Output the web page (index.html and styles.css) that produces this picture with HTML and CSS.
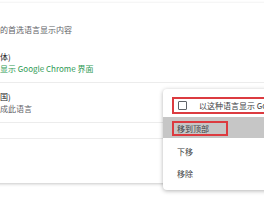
FILE: index.html
```html
<!DOCTYPE html>
<html>
<head>
    <link rel="stylesheet" href="styles.css">
</head>
<body>
    <div class="card">
        <p class="hint">的首选语言显示内容</p>
        <div class="lang-row">
            <div class="lang-name">体)</div>
            <div class="lang-note ui-lang">显示 Google Chrome 界面</div>
        </div>
        <div class="lang-row">
            <div class="lang-name">国)</div>
            <div class="lang-note">成此语言</div>
        </div>
        <div class="lang-row"></div>
    </div>

    <div class="menu">
        <label class="menu-check">
            <span class="checkbox"></span>
            <span>以这种语言显示 Google Chrome 界面</span>
        </label>
        <div class="menu-item active">
            <span class="mark">移到顶部</span>
        </div>
        <div class="menu-item">下移</div>
        <div class="menu-item">移除</div>
    </div>
</body>
</html>
```

FILE: styles.css
```css
body {
    margin: 0;
    height: 200px;
    overflow: hidden;
    position: relative;
    background: #fff;
    font-family: "Noto Sans CJK SC", "Noto Sans", sans-serif;
    font-size: 8px;
    color: #202124;
}

.card {
    margin: 3px 0 0 -10px;
    padding: 21px 0 0 10px;
    width: 300px;
    height: 180px;
    box-sizing: border-box;
    background: #fff;
    box-shadow: 0 1px 3px rgba(0,0,0,0.22);
}

.hint {
    margin: 0 0 7px;
    line-height: 12px;
    color: #5f6368;
}

.lang-row {
    padding: 8px 0 7px;
    line-height: 12px;
    border-bottom: 1px solid #ececec;
}

.lang-note {
    color: #5f6368;
}

.lang-note.ui-lang {
    color: #2f9a55;
}

.menu {
    position: absolute;
    left: 163px;
    top: 89px;
    width: 120px;
    padding: 8px 0 5px;
    background: #fff;
    border-radius: 4px;
    box-shadow: 0 1px 4px rgba(0,0,0,0.3);
    color: #3c4043;
}

.menu-check {
    display: flex;
    align-items: center;
    height: 17px;
    box-sizing: border-box;
    margin: 0 0 3px 9px;
    padding-left: 4px;
    border: 2px solid #dc3b40;
    white-space: nowrap;
}

.checkbox {
    width: 9px;
    height: 9px;
    box-sizing: border-box;
    margin-right: 12px;
    border: 1.5px solid #5f6368;
    border-radius: 1px;
    flex-shrink: 0;
}

.menu-item {
    height: 22px;
    line-height: 22px;
    padding-left: 14px;
}

.menu-item.active {
    height: 21px;
    box-sizing: border-box;
    margin-bottom: 3px;
    padding: 4px 0 0 9px;
    background: #c6c6c6;
    line-height: 11px;
}

.mark {
    display: inline-block;
    height: 15px;
    box-sizing: border-box;
    padding: 0 17px 0 3px;
    border: 2px solid #dc3b40;
}
```
